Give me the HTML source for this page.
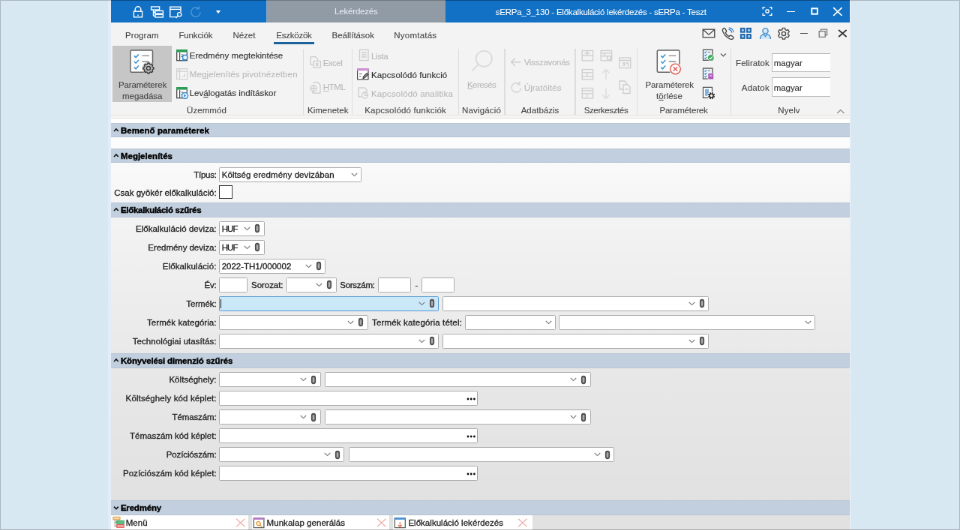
<!DOCTYPE html><html><head><meta charset="utf-8"><title>sERPa</title><style>
html,body{margin:0;padding:0;}
body{width:960px;height:530px;overflow:hidden;background:#d8e8f3;font-family:"Liberation Sans",sans-serif;}
#s{position:absolute;left:0;top:0;width:1280px;height:707px;transform:scale(0.75);transform-origin:0 0;will-change:transform;font-size:11.5px;color:#222;}
#s div,#s span,#s svg{position:absolute;}
.t{white-space:nowrap;line-height:14px;height:14px;-webkit-text-stroke:0.3px currentColor;}
.b{font-weight:bold;color:#000;-webkit-text-stroke-width:0.4px;}
.d{color:#b8b8b8;-webkit-text-stroke-width:0.1px;}
.g{color:#484848;-webkit-text-stroke-width:0.12px;}
.r{color:#333;-webkit-text-stroke-width:0.15px;}
.bx{background:#fff;border:1px solid #adadad;border-radius:1.5px;box-sizing:border-box;}
.hd{background:#c1cfde;box-shadow:inset 0 1px 0 #b8c6d5,inset 0 -1px 0 #b8c6d5;left:147.67px;width:985.66px;height:20px;}
.sep{width:1.500px;background:#dddddd;top:64.5px;height:88px;}
u{text-decoration:underline;}
</style></head><body><div id="s">
<div style="left:144.47px;top:0.00px;width:990.16px;height:707.00px;background:#e2edf7;"></div>
<div style="left:147.67px;top:0.00px;width:985.66px;height:707.00px;background:#f3f3f3;"></div>
<div style="left:147.67px;top:0.00px;width:985.66px;height:30.20px;background:#1271c4;"></div>
<div style="left:147.67px;top:0.00px;width:985.66px;height:1.00px;background:#0f62ab;"></div>
<div style="left:355.00px;top:0.00px;width:239.40px;height:30.40px;background:#919ba6;"></div>
<div style="left:355.00px;top:0.00px;width:1.40px;height:30.20px;background:#86a8cb;"></div>
<div class="t " style="top:8.45px;left:274.85px;width:400px;text-align:center;letter-spacing:-0.197px;color:#e9eef4;-webkit-text-stroke-width:0;"><span id="t1" style="position:static">Lekérdezés</span></div>
<span id="t2" class="t " style="top:8.75px;left:660.70px;letter-spacing:-0.226px;color:#fff;-webkit-text-stroke-width:0.05px;">sERPa_3_130 - Előkalkuláció lekérdezés - sERPa - Teszt</span>
<svg style="left:176.00px;top:7.00px;" width="16.00" height="18.00" viewBox="0 0 16 18"><path d="M4.2 8.2V5.6a3.8 3.8 0 0 1 7.6 0V8.2" stroke="#fff" fill="none" stroke-width="1.4"/><rect x="2.4" y="8.2" width="11.2" height="7.6" stroke="#fff" fill="none" stroke-width="1.4"/><rect x="7.3" y="12.5" width="1.4" height="1.6" fill="#fff"/></svg>
<svg style="left:200.00px;top:7.00px;" width="20.00" height="18.00" viewBox="0 0 20 18"><rect x="1.6" y="2" width="11" height="4" stroke="#fff" fill="none" stroke-width="1.4"/><path d="M4.5 6v8.6M4.5 9.3h2.5M4.5 14.4h2.5" stroke="#fff" fill="none" stroke-width="1.4"/><rect x="7" y="7.4" width="10.4" height="3.6" stroke="#fff" fill="none" stroke-width="1.4"/><rect x="7" y="12.4" width="10.4" height="3.6" stroke="#fff" fill="none" stroke-width="1.4"/></svg>
<svg style="left:225.00px;top:7.00px;" width="20.00" height="18.00" viewBox="0 0 20 18"><path d="M10.5 15.6H1.8V2.2H16V9" stroke="#fff" fill="none" stroke-width="1.4"/><path d="M1.8 5.4H16" stroke="#fff" fill="none" stroke-width="1.4"/><circle cx="14.2" cy="12.2" r="2.6" stroke="#fff" fill="none" stroke-width="1.4"/><path d="M12.2 14.2L9.6 17" stroke="#fff" fill="none" stroke-width="1.4"/></svg>
<svg style="left:252.00px;top:7.00px;" width="19.00" height="18.00" viewBox="0 0 19 18"><path d="M15.2 9.4a6.2 6.2 0 1 1-2.2-5" stroke="#4b96da" fill="none" stroke-width="1.5"/><path d="M13.4 1.2v3.6h-3.6" stroke="#4b96da" fill="none" stroke-width="1.5"/></svg>
<svg style="left:286.70px;top:12.70px;" width="8.00" height="6.00" viewBox="0 0 8 6"><path d="M0.8 1h6.4L4 5z" fill="#fff"/></svg>
<svg style="left:1016.00px;top:7.50px;" width="14.00" height="14.00" viewBox="0 0 14 14"><path d="M1.2 4.4V1.6H4.2M9.8 1.6h3v2.8M12.8 9.6v2.8h-3M4.2 12.4H1.2V9.6" stroke="#fff" fill="none" stroke-width="1.4"/><rect x="5" y="5" width="4" height="4" rx="1" stroke="#fff" fill="none" stroke-width="1.4"/></svg>
<div style="left:1048.70px;top:14.50px;width:11.00px;height:1.70px;background:#fff;"></div>
<svg style="left:1079.50px;top:8.50px;" width="12.00" height="12.00" viewBox="0 0 12 12"><rect x="2.3" y="2.3" width="7.6" height="7.4" stroke="#fff" fill="none" stroke-width="2"/></svg>
<svg style="left:1110.00px;top:8.90px;" width="14.00" height="13.00" viewBox="0 0 14 13"><path d="M1.2 1.2L12.6 11.8M12.6 1.2L1.2 11.8" stroke="#fff" fill="none" stroke-width="1.7"/></svg>
<svg style="left:936.00px;top:38.00px;" width="18.00" height="13.00" viewBox="0 0 18 13"><rect x="1.2" y="1.2" width="15.6" height="10.6" stroke="#444" fill="none" stroke-width="1.3"/><path d="M1.4 1.6L9 8.2L16.6 1.6" stroke="#444" fill="none" stroke-width="1.3"/></svg>
<svg style="left:961.00px;top:35.50px;" width="18.00" height="18.00" viewBox="0 0 18 18"><path d="M3.2 2.2c1-1 2-1 2.6 0l1.6 2.6c.4.8.2 1.4-.4 2l-.8.8c.8 2 2.6 4 4.8 5l.9-.9c.6-.6 1.300-.7 2-.3l2.500 1.600c.9.600.9 1.600 0 2.500-1.400 1.400-3.200 1.200-5.600-.2-3.400-2-6.200-5.200-7.800-8.800-.8-1.800-.8-3.200.2-4.300z" stroke="#444" fill="none" stroke-width="1.3"/><path d="M10.4 3.200a5 5 0 0 1 4.400 4.400M10.800 0.800a7.600 7.600 0 0 1 6.400 6.400" stroke="#2a7fc9" fill="none" stroke-width="1.2"/></svg>
<svg style="left:986.30px;top:36.30px;" width="17.00" height="17.00" viewBox="0 0 17 17"><rect x="1.9" y="1.9" width="4.800" height="4.800" stroke="#1d68ab" fill="#b5d3ec" stroke-width="2"/><rect x="10.100" y="1.9" width="4.800" height="4.800" stroke="#1d68ab" fill="#b5d3ec" stroke-width="2"/><rect x="1.9" y="10.100" width="4.800" height="4.800" stroke="#1d68ab" fill="#b5d3ec" stroke-width="2"/><rect x="10.100" y="10.100" width="4.800" height="4.800" stroke="#1d68ab" fill="#b5d3ec" stroke-width="2"/></svg>
<svg style="left:1012.30px;top:36.30px;" width="17.00" height="17.00" viewBox="0 0 17 17"><circle cx="8.5" cy="5.2" r="3.6" stroke="#3a8ed0" fill="#d5e8f7" stroke-width="1.4"/><path d="M1.6 16c0-3.600 2.400-5.800 4.600-6.400l2.300 3 2.300-3c2.200.6 4.600 2.800 4.600 6.400" stroke="#3a8ed0" fill="#d5e8f7" stroke-width="1.4"/></svg>
<svg style="left:1036.30px;top:35.50px;" width="18.00" height="18.00" viewBox="0 0 18 18"><path d="M7.4 1.400h3.200l.5 2.200 1.500.800 2.100-.800 1.600 2.800-1.600 1.500v1.800l1.600 1.500-1.600 2.800-2.100-.8-1.500.8-.5 2.200H7.400l-.5-2.200-1.500-.8-2.100.8-1.600-2.800 1.600-1.500V8l-1.600-1.600 1.600-2.800 2.100.8 1.500-.8z" stroke="#444" fill="none" stroke-width="1.3" stroke-linejoin="round"/><circle cx="9" cy="9" r="2.600" stroke="#444" fill="none" stroke-width="1.3"/></svg>
<div style="left:1066.70px;top:43.70px;width:10.50px;height:1.40px;background:#555;"></div>
<svg style="left:1091.00px;top:38.00px;" width="13.00" height="13.00" viewBox="0 0 13 13"><path d="M3.600 3.400V1.200H11.600V8.800H9.400" stroke="#7c7c7c" fill="none" stroke-width="1.3"/><rect x="1.200" y="3.600" width="8" height="7.800" stroke="#7c7c7c" fill="none" stroke-width="1.300"/></svg>
<svg style="left:1117.00px;top:39.00px;" width="13.00" height="11.00" viewBox="0 0 13 11"><path d="M1.2 1L11.600 10M11.600 1L1.200 10" stroke="#333" fill="none" stroke-width="1.700"/></svg>
<span id="t3" class="t g" style="top:39.85px;left:167.00px;letter-spacing:0.072px;">Program</span>
<span id="t4" class="t g" style="top:39.85px;left:238.40px;letter-spacing:-0.141px;">Funkciók</span>
<span id="t5" class="t g" style="top:39.85px;left:310.40px;letter-spacing:-0.009px;">Nézet</span>
<span id="t6" class="t g" style="top:39.85px;left:368.30px;letter-spacing:-0.240px;">Eszközök</span>
<div style="left:365.20px;top:56.20px;width:53.50px;height:2.60px;background:#1c639d;"></div>
<span id="t7" class="t g" style="top:39.85px;left:442.50px;letter-spacing:0.022px;">Beállítások</span>
<span id="t8" class="t g" style="top:39.85px;left:525.30px;letter-spacing:0.226px;">Nyomtatás</span>
<div style="left:147.67px;top:152.60px;width:985.66px;height:0.90px;background:#e4e3e2;"></div>
<div style="left:147.67px;top:153.50px;width:985.66px;height:3.10px;background:#f6f5f4;"></div>
<div style="left:147.67px;top:156.60px;width:985.66px;height:0.90px;background:#e0e0e0;"></div>
<div style="left:147.67px;top:157.50px;width:985.66px;height:7.00px;background:#ffffff;"></div>
<div style="left:149.70px;top:61.30px;width:79.50px;height:74.40px;background:#c6c6c6;"></div>
<svg style="left:170.00px;top:63.00px;" width="44.00" height="40.00" viewBox="0 0 44 40"><rect x="3.9" y="4" width="29.6" height="29.2" rx="1.5" stroke="#666" fill="#fdfdfd" stroke-width="1.5"/><path d="M8.9 11.4l2.2 2.200 3.800-4.200M8.9 19l2.200 2.200 3.800-4.200M8.9 26.6l2.200 2.200 3.800-4.200" stroke="#3f93d2" fill="none" stroke-width="1.5"/><path d="M19.4 11.4h9.500M19.4 19h9.500" stroke="#8c8c8c" fill="none" stroke-width="1.4"/><circle cx="28" cy="28" r="8.6" fill="#c6c6c6"/><path d="M34.94 27.09 L34.94 28.91 L33.41 29.45 L32.85 30.80 L33.55 32.27 L32.27 33.55 L30.80 32.85 L29.45 33.41 L28.91 34.94 L27.09 34.94 L26.55 33.41 L25.20 32.85 L23.73 33.55 L22.45 32.27 L23.15 30.80 L22.59 29.45 L21.06 28.91 L21.06 27.09 L22.59 26.55 L23.15 25.20 L22.45 23.73 L23.73 22.45 L25.20 23.15 L26.55 22.59 L27.09 21.06 L28.91 21.06 L29.45 22.59 L30.80 23.15 L32.27 22.45 L33.55 23.73 L32.85 25.20 L33.41 26.55Z" stroke="#3c3c3c" fill="#c6c6c6" stroke-width="1.500" stroke-linejoin="round"/><circle cx="28" cy="28" r="2.52" stroke="#3c3c3c" fill="none" stroke-width="1.500"/></svg>
<div class="t g" style="top:106.15px;left:-9.95px;width:400px;text-align:center;letter-spacing:-0.159px;"><span id="t9" style="position:static">Paraméterek</span></div>
<div class="t g" style="top:121.15px;left:-10.30px;width:400px;text-align:center;letter-spacing:-0.040px;"><span id="t10" style="position:static">megadása</span></div>
<svg style="left:233.70px;top:64.90px;" width="18.00" height="18.00" viewBox="0 0 18 18"><rect x="1.7" y="1.7" width="13.600" height="14" stroke="#4a4a4a" fill="#fff" stroke-width="1.300"/><rect x="1" y="1" width="15" height="3.600" fill="#2e9b57"/><path d="M5.6 5v10.500M7.5 8h3M7.5 10.5h3" stroke="#4a4a4a" fill="none" stroke-width="1.200"/><circle cx="12.8" cy="11.5" r="3.300" stroke="#3a8ed0" fill="#e8f3fc" stroke-width="1.500"/><path d="M10.5 14l-2.200 2.400" stroke="#3a8ed0" stroke-width="1.500"/></svg>
<svg style="left:233.70px;top:90.00px;" width="18.00" height="18.00" viewBox="0 0 18 18"><rect x="1.7" y="1.7" width="14" height="14" stroke="#cfcfcf" fill="#f6f6f6" stroke-width="1.200"/><path d="M1.7 5.2h14M5.5 1.7v14M8 12h4.500v-4" stroke="#cfcfcf" fill="none" stroke-width="1.200"/></svg>
<svg style="left:233.70px;top:115.00px;" width="18.00" height="18.00" viewBox="0 0 18 18"><rect x="1.7" y="1.7" width="13.600" height="14" stroke="#4a4a4a" fill="#fff" stroke-width="1.300"/><rect x="1" y="1" width="15" height="3.600" fill="#2e9b57"/><path d="M5.6 5v10.500M7.5 8h3M7.5 10.5h3" stroke="#4a4a4a" fill="none" stroke-width="1.200"/><circle cx="12.5" cy="12.5" r="4" stroke="#3a8ed0" fill="#e8f3fc" stroke-width="1.400"/><path d="M11.3 10.5l2.800 2-2.800 2z" fill="#2a7fc9"/></svg>
<span id="t11" class="t r" style="top:67.45px;left:252.70px;letter-spacing:0.028px;">Eredmény megtekintése</span>
<span id="t12" class="t d" style="top:92.45px;left:252.70px;letter-spacing:0.153px;">Megjelenítés pivotnézetben</span>
<span id="t13" class="t r" style="top:117.45px;left:252.70px;letter-spacing:0.023px;">Lev<u>á</u>logatás indításkor</span>
<div class="t g" style="top:139.55px;left:75.50px;width:400px;text-align:center;letter-spacing:0.085px;"><span id="t14" style="position:static">Üzemmód</span></div>
<div class="sep" style="left:403.75px"></div>
<div class="sep" style="left:468.55px"></div>
<div class="sep" style="left:610.95px"></div>
<div class="sep" style="left:672.25px"></div>
<div class="sep" style="left:766.25px"></div>
<div class="sep" style="left:848.55px"></div>
<div class="sep" style="left:973.75px"></div>
<svg style="left:411.50px;top:74.30px;" width="18.00" height="18.00" viewBox="0 0 18 18"><path d="M2 1.700h6.500l3 3v3" stroke="#cdcdcd" fill="none" stroke-width="1.300"/><path d="M2 1.700v10.500h3.500" stroke="#cdcdcd" fill="none" stroke-width="1.300"/><rect x="6" y="7.500" width="9.500" height="8.500" stroke="#cdcdcd" fill="none" stroke-width="1.300"/><path d="M9 10l3.500 4M12.500 10l-3.500 4" stroke="#cdcdcd" fill="none" stroke-width="1.300"/></svg>
<span id="t15" class="t d" style="top:77.05px;left:430.70px;letter-spacing:-0.506px;">Excel</span>
<svg style="left:411.50px;top:107.80px;" width="18.00" height="18.00" viewBox="0 0 18 18"><path d="M5 1.700h6.500l3.500 3.500v11h-10v-4" stroke="#cdcdcd" fill="none" stroke-width="1.300"/><circle cx="6" cy="10" r="4" stroke="#cdcdcd" fill="none" stroke-width="1.300"/><path d="M2 10h8M6 6v8" stroke="#cdcdcd" fill="none" stroke-width="1.300"/></svg>
<span id="t16" class="t d" style="top:109.45px;left:430.70px;letter-spacing:-0.380px;"><u>H</u>TML</span>
<div class="t g" style="top:139.55px;left:237.25px;width:400px;text-align:center;letter-spacing:0.017px;"><span id="t17" style="position:static">Kimenetek</span></div>
<svg style="left:477.70px;top:64.90px;" width="15.00" height="17.00" viewBox="0 0 15 17"><rect x="1.500" y="1.300" width="11.500" height="14.200" stroke="#cdcdcd" fill="none" stroke-width="1.300"/><path d="M4 5h6.500M4 8h6.500M4 11h6.500" stroke="#cdcdcd" fill="none" stroke-width="1.300"/></svg>
<span id="t18" class="t d" style="top:67.85px;left:495.00px;letter-spacing:-0.401px;">Lista</span>
<svg style="left:475.30px;top:89.70px;" width="18.00" height="18.00" viewBox="0 0 18 18"><rect x="1.600" y="2.200" width="14.400" height="13.600" stroke="#4a4a4a" fill="#fff" stroke-width="1.200"/><rect x="1" y="1" width="15.600" height="3.200" fill="#d08fd2"/><path d="M4 8.500h3.500M4 11.500h2.500" stroke="#666" stroke-width="1.100"/><path d="M8.800 14.600l.8-2.800 4.600-4.600 2 2-4.600 4.600z" fill="#777" stroke="#333" stroke-width="1"/></svg>
<span id="t19" class="t r" style="top:92.75px;left:495.00px;letter-spacing:0.087px;">Kapcsolódó funkció</span>
<svg style="left:475.30px;top:114.50px;" width="18.00" height="18.00" viewBox="0 0 18 18"><path d="M3 2h8l3 3v4" stroke="#cdcdcd" fill="none" stroke-width="1.300"/><path d="M3 2v12h4" stroke="#cdcdcd" fill="none" stroke-width="1.300"/><circle cx="11.500" cy="12" r="4" stroke="#cdcdcd" fill="none" stroke-width="1.300"/><path d="M11.500 8v4h4" stroke="#cdcdcd" fill="none" stroke-width="1.300"/></svg>
<span id="t20" class="t d" style="top:117.65px;left:495.00px;letter-spacing:0.175px;">Kapcsolódó analitika</span>
<div class="t g" style="top:139.55px;left:340.65px;width:400px;text-align:center;letter-spacing:0.169px;"><span id="t21" style="position:static">Kapcsolódó funkciók</span></div>
<svg style="left:625.00px;top:62.00px;" width="36.00" height="38.00" viewBox="0 0 36 38"><circle cx="20.300" cy="16.300" r="10.600" stroke="#d8d8d8" fill="none" stroke-width="1.600"/><path d="M12.800 23.800L4.200 32.700" stroke="#d8d8d8" stroke-width="1.600"/></svg>
<div class="t d" style="top:105.95px;left:442.10px;width:400px;text-align:center;letter-spacing:-0.572px;"><span id="t22" style="position:static"><u>K</u>eresés</span></div>
<div class="t g" style="top:139.55px;left:442.00px;width:400px;text-align:center;letter-spacing:0.167px;"><span id="t23" style="position:static">Navigáció</span></div>
<svg style="left:680.00px;top:76.00px;" width="16.00" height="13.00" viewBox="0 0 16 13"><path d="M14.200 6.700H1.800M6.800 1.500L1.600 6.700l5.200 5.200" stroke="#cdcdcd" fill="none" stroke-width="1.400"/></svg>
<span id="t24" class="t d" style="top:76.05px;left:698.70px;letter-spacing:-0.305px;">Visszavonás</span>
<svg style="left:680.00px;top:108.00px;" width="18.00" height="17.00" viewBox="0 0 18 17"><path d="M14.600 9.200a6.300 6.300 0 1 1-2.400-5.400" stroke="#d4d4d4" fill="none" stroke-width="1.500"/><path d="M12.800 0.800v3.600h-3.600" stroke="#d4d4d4" fill="none" stroke-width="1.500"/></svg>
<span id="t25" class="t d" style="top:109.65px;left:698.70px;letter-spacing:0.142px;">Újratöltés</span>
<div class="t g" style="top:139.55px;left:520.00px;width:400px;text-align:center;letter-spacing:0.011px;"><span id="t26" style="position:static">Adatbázis</span></div>
<svg style="left:775.00px;top:65.50px;" width="70.00" height="68.00" viewBox="0 0 70 68"><rect x="1.2" y="1.5" width="14.400" height="13.400" stroke="#cdcdcd" fill="none" stroke-width="1.300"/><path d="M1.2 8.200000000000001h14.400M4.5 4.8h7M8.0 1.8v6" stroke="#cdcdcd" fill="none" stroke-width="1.300"/><rect x="1.2" y="26.5" width="14.400" height="13.400" stroke="#cdcdcd" fill="none" stroke-width="1.300"/><path d="M1.2 30.8h14.400M1.2 35.8h14.400M8.0 31.8v3" stroke="#cdcdcd" fill="none" stroke-width="1.300"/><rect x="1.2" y="51.5" width="14.400" height="13.400" stroke="#cdcdcd" fill="none" stroke-width="1.300"/><path d="M1.2 54.8h14.400M1.2 58.8h14.400M8.0 60.3v3" stroke="#cdcdcd" fill="none" stroke-width="1.300"/><rect x="26.2" y="1.5" width="14.400" height="13.400" stroke="#cdcdcd" fill="none" stroke-width="1.300"/><path d="M26.2 4.8h14.400M26.2 8.8h9M31.0 4.8v4"  stroke="#cdcdcd" fill="none" stroke-width="1.300"/><circle cx="37.0" cy="11.3" r="2.600" stroke="#cdcdcd" fill="none" stroke-width="1.300"/><path d="M33 40V27M28.500 31.500l4.500-4.700 4.500 4.700" stroke="#dadada" fill="none" stroke-width="1.300"/><path d="M33 52v13M28.500 60.500l4.500 4.700 4.500-4.700" stroke="#dadada" fill="none" stroke-width="1.300"/><rect x="50.800" y="11" width="15" height="13.600" stroke="#cdcdcd" fill="none" stroke-width="1.300"/><path d="M50.800 14.500h15M55 18h3v3h-3M60 18h2.500v4.500" stroke="#cdcdcd" fill="none" stroke-width="1.300"/><path d="M51 42h6.500l3 3v8h-9.500z" stroke="#cdcdcd" fill="none" stroke-width="1.300"/><path d="M56 47h6l3 3v8.500h-9z" stroke="#cdcdcd" fill="#f3f3f3" stroke-width="1.300"/><path d="M58 53h5" stroke="#cdcdcd" fill="none" stroke-width="1.300"/></svg>
<div class="t g" style="top:139.55px;left:608.00px;width:400px;text-align:center;letter-spacing:-0.367px;"><span id="t27" style="position:static">Szerkesztés</span></div>
<svg style="left:872.00px;top:63.00px;" width="44.00" height="40.00" viewBox="0 0 44 40"><rect x="4.3" y="4" width="29.6" height="29.2" rx="1.5" stroke="#666" fill="#fdfdfd" stroke-width="1.5"/><path d="M9.3 11.4l2.2 2.200 3.800-4.200M9.3 19l2.200 2.200 3.800-4.200M9.3 26.6l2.200 2.200 3.800-4.200" stroke="#3f93d2" fill="none" stroke-width="1.5"/><path d="M19.8 11.4h9.500M19.8 19h9.500" stroke="#8c8c8c" fill="none" stroke-width="1.4"/><circle cx="28.500" cy="29" r="8.600" fill="#f3f3f3"/><circle cx="28.500" cy="29" r="6.800" stroke="#e4524c" fill="#fff" stroke-width="1.300"/><path d="M25.700 26.200l5.600 5.600M31.300 26.200l-5.600 5.600" stroke="#e4524c" stroke-width="1.300"/></svg>
<div class="t g" style="top:106.45px;left:692.75px;width:400px;text-align:center;letter-spacing:-0.122px;"><span id="t28" style="position:static">Paraméterek</span></div>
<div class="t g" style="top:121.45px;left:692.50px;width:400px;text-align:center;letter-spacing:0.065px;"><span id="t29" style="position:static">t<u>ö</u>rlése</span></div>
<div class="t g" style="top:139.55px;left:711.60px;width:400px;text-align:center;letter-spacing:-0.149px;"><span id="t30" style="position:static">Paraméterek</span></div>
<svg style="left:935.50px;top:64.90px;" width="20.00" height="70.00" viewBox="0 0 20 70"><rect x="1.5" y="1.3" width="12.500" height="14" stroke="#555" fill="#eef3f8" stroke-width="1.300"/><path d="M3.5 4.5l1 1 1.800-2M3.5 8.3l1 1 1.800-2M3.5 12.1l1 1 1.800-2" stroke="#2a86c8" fill="none" stroke-width="1.100"/><path d="M8 4.5h3" stroke="#777" stroke-width="1.100"/><circle cx="11.8" cy="12.0" r="4.300" fill="#35a853" stroke="#f3f3f3" stroke-width="0.800"/><path d="M9.8 12.0l1.500 1.500 2.600-3" stroke="#fff" fill="none" stroke-width="1.200"/><rect x="1.5" y="26.1" width="12.500" height="14" stroke="#555" fill="#eef3f8" stroke-width="1.300"/><path d="M3.5 29.3l1 1 1.800-2M3.5 33.1l1 1 1.800-2M3.5 36.9l1 1 1.800-2" stroke="#2a86c8" fill="none" stroke-width="1.100"/><path d="M8 29.3h3" stroke="#777" stroke-width="1.100"/><rect x="8" y="32.8" width="7.600" height="8" fill="#a755b5" stroke="#f3f3f3" stroke-width="0.600"/><path d="M10 34.8h3.600v2.500h-3.600z" fill="#d9a8e2"/><rect x="1.5" y="51.4" width="12" height="14" stroke="#555" fill="#fff" stroke-width="1.300"/><rect x="4" y="53.800000000000004" width="5" height="9" fill="#7fb2df"/><circle cx="12.6" cy="62.6" r="5.400" fill="#f3f3f3"/><circle cx="12.6" cy="62.6" r="2.500" stroke="#1c1c1c" fill="#f8f8f8" stroke-width="1.400"/><path d="M15.28 63.70L16.95 64.39M13.72 65.28L14.41 66.94M11.50 65.28L10.81 66.95M9.92 63.72L8.26 64.41M9.92 61.50L8.25 60.81M11.48 59.92L10.79 58.26M13.70 59.92L14.39 58.25M15.28 61.48L16.94 60.79" stroke="#1c1c1c" stroke-width="1.500"/></svg>
<svg style="left:960.00px;top:69.50px;" width="9.00" height="7.00" viewBox="0 0 9 7"><path d="M1 1.500l3.400 3.400 3.400-3.400" stroke="#555" fill="none" stroke-width="1.200"/></svg>
<span id="t31" class="t g" style="top:77.45px;right:254.10px;letter-spacing:0.088px;">Feliratok</span>
<span id="t32" class="t g" style="top:109.95px;right:254.10px;letter-spacing:0.214px;">Adatok</span>
<div class="bx" style="left:1029.30px;top:70.50px;width:77.70px;height:25.20px;border-color:#b4b4b4 #c4c4c4 #bcbcbc #bcbcbc;border-right:none;border-radius:0;"></div>
<div class="bx" style="left:1029.30px;top:103.20px;width:77.70px;height:25.50px;border-color:#b4b4b4 #c4c4c4 #bcbcbc #bcbcbc;border-right:none;border-radius:0;"></div>
<span id="t33" class="t r" style="top:76.95px;left:1031.80px;letter-spacing:-0.076px;">magyar</span>
<span id="t34" class="t r" style="top:109.95px;left:1031.80px;letter-spacing:-0.076px;">magyar</span>
<div class="t g" style="top:139.55px;left:852.00px;width:400px;text-align:center;letter-spacing:0.128px;"><span id="t35" style="position:static">Nyelv</span></div>
<svg style="left:1115.00px;top:144.50px;" width="12.00" height="8.00" viewBox="0 0 12 8"><path d="M1.200 6l4.600-4.400 4.600 4.400" stroke="#8a8a8a" fill="none" stroke-width="1.200"/></svg>
<div style="left:147.67px;top:164.5px;width:985.66px;height:545px;background:linear-gradient(#ffffff 0px,#fbfbfb 40px,#f2f2f2 150px,#e8e8e8 330px,#e1e1e1 520px);"></div>
<div class="hd" style="top:164.40px;height:19.10px"></div>
<svg style="left:151.20px;top:169.95px;" width="8.00" height="7.00" viewBox="0 0 8 7"><path d="M1 5l2.900-3 2.900 3" stroke="#111" fill="none" stroke-width="1.600"/></svg>
<span id="t36" class="t b" style="top:167.40px;left:160.90px;letter-spacing:0.063px;">Bemenő paraméterek</span>
<div class="hd" style="top:197.70px;height:19.70px"></div>
<svg style="left:151.20px;top:203.55px;" width="8.00" height="7.00" viewBox="0 0 8 7"><path d="M1 5l2.900-3 2.900 3" stroke="#111" fill="none" stroke-width="1.600"/></svg>
<span id="t37" class="t b" style="top:201.00px;left:160.90px;letter-spacing:0.006px;">Megjelenítés</span>
<span id="t38" class="t " style="top:226.45px;right:991.40px;letter-spacing:-0.278px;">Típus:</span>
<div class="bx" style="left:292.30px;top:222.70px;width:189.70px;height:20.60px;"></div>
<svg style="left:468.00px;top:230.30px;" width="9.00" height="6.00" viewBox="0 0 9 6"><path d="M0.800 1l3.700 3.600 3.700-3.600" stroke="#7a7a7a" fill="none" stroke-width="1.100"/></svg>
<span id="t39" class="t " style="top:226.35px;left:295.70px;letter-spacing:0.064px;">Költség eredmény devizában</span>
<span id="t40" class="t " style="top:249.85px;right:991.40px;letter-spacing:0.006px;">Csak gyökér előkalkuláció:</span>
<div class="bx" style="left:292.30px;top:247.00px;width:17.30px;height:18.40px;border-color:#333;border-radius:0;"></div>
<div class="hd" style="top:270.00px;height:20.00px"></div>
<svg style="left:151.20px;top:276.00px;" width="8.00" height="7.00" viewBox="0 0 8 7"><path d="M1 5l2.900-3 2.900 3" stroke="#111" fill="none" stroke-width="1.600"/></svg>
<span id="t41" class="t b" style="top:273.45px;left:160.90px;letter-spacing:-0.287px;">Előkalkuláció szűrés</span>
<span id="t42" class="t " style="top:297.90px;right:991.40px;letter-spacing:0.040px;">Előkalkuláció deviza:</span>
<div class="bx" style="left:292.30px;top:295.00px;width:60.40px;height:19.50px;"></div>
<svg style="left:339.40px;top:298.45px;" width="8.00" height="13.00" viewBox="0 0 8 13"><rect x="1.700" y="1.600" width="4.600" height="9.800" rx="2.300" stroke="#4a4a4a" fill="#999" stroke-width="1.600"/><path d="M4 4.200v4.600" stroke="#d0d0d0" stroke-width="0.700"/></svg>
<svg style="left:325.40px;top:302.05px;" width="9.00" height="6.00" viewBox="0 0 9 6"><path d="M0.800 1l3.700 3.600 3.700-3.600" stroke="#7a7a7a" fill="none" stroke-width="1.100"/></svg>
<span id="t43" class="t " style="top:297.90px;left:295.70px;letter-spacing:-0.945px;">HUF</span>
<span id="t44" class="t " style="top:322.90px;right:991.40px;letter-spacing:-0.047px;">Eredmény deviza:</span>
<div class="bx" style="left:292.30px;top:320.00px;width:60.40px;height:19.50px;"></div>
<svg style="left:339.40px;top:323.45px;" width="8.00" height="13.00" viewBox="0 0 8 13"><rect x="1.700" y="1.600" width="4.600" height="9.800" rx="2.300" stroke="#4a4a4a" fill="#999" stroke-width="1.600"/><path d="M4 4.200v4.600" stroke="#d0d0d0" stroke-width="0.700"/></svg>
<svg style="left:325.40px;top:327.05px;" width="9.00" height="6.00" viewBox="0 0 9 6"><path d="M0.800 1l3.700 3.600 3.700-3.600" stroke="#7a7a7a" fill="none" stroke-width="1.100"/></svg>
<span id="t45" class="t " style="top:322.90px;left:295.70px;letter-spacing:-0.945px;">HUF</span>
<span id="t46" class="t " style="top:347.90px;right:991.40px;letter-spacing:0.113px;">Előkalkuláció:</span>
<div class="bx" style="left:292.30px;top:345.00px;width:141.70px;height:19.50px;"></div>
<svg style="left:420.70px;top:348.45px;" width="8.00" height="13.00" viewBox="0 0 8 13"><rect x="1.700" y="1.600" width="4.600" height="9.800" rx="2.300" stroke="#4a4a4a" fill="#999" stroke-width="1.600"/><path d="M4 4.200v4.600" stroke="#d0d0d0" stroke-width="0.700"/></svg>
<svg style="left:406.70px;top:352.05px;" width="9.00" height="6.00" viewBox="0 0 9 6"><path d="M0.800 1l3.700 3.600 3.700-3.600" stroke="#7a7a7a" fill="none" stroke-width="1.100"/></svg>
<span id="t47" class="t " style="top:347.90px;left:295.70px;letter-spacing:-0.008px;">2022-TH1/000002</span>
<span id="t48" class="t " style="top:372.90px;right:991.40px;letter-spacing:-0.174px;">Év:</span>
<div class="bx" style="left:292.30px;top:370.00px;width:37.70px;height:19.50px;"></div>
<span id="t49" class="t " style="top:372.90px;left:335.00px;letter-spacing:-0.041px;">Sorozat:</span>
<div class="bx" style="left:382.00px;top:370.00px;width:66.70px;height:19.50px;"></div>
<svg style="left:435.40px;top:373.45px;" width="8.00" height="13.00" viewBox="0 0 8 13"><rect x="1.700" y="1.600" width="4.600" height="9.800" rx="2.300" stroke="#4a4a4a" fill="#999" stroke-width="1.600"/><path d="M4 4.200v4.600" stroke="#d0d0d0" stroke-width="0.700"/></svg>
<svg style="left:421.40px;top:377.05px;" width="9.00" height="6.00" viewBox="0 0 9 6"><path d="M0.800 1l3.700 3.600 3.700-3.600" stroke="#7a7a7a" fill="none" stroke-width="1.100"/></svg>
<span id="t50" class="t " style="top:372.90px;left:453.30px;letter-spacing:-0.285px;">Sorszám:</span>
<div class="bx" style="left:504.00px;top:370.00px;width:44.00px;height:19.50px;"></div>
<span id="t51" class="t " style="top:372.90px;left:553.50px;letter-spacing:0.156px;">-</span>
<div class="bx" style="left:562.40px;top:370.00px;width:43.60px;height:19.50px;"></div>
<span id="t52" class="t " style="top:397.90px;right:991.40px;letter-spacing:-0.087px;">Termék:</span>
<div class="bx" style="left:292.30px;top:395.00px;width:292.90px;height:19.50px;background:#cbe8f9;border-color:#5b9bd3;"></div>
<svg style="left:571.90px;top:398.45px;" width="8.00" height="13.00" viewBox="0 0 8 13"><rect x="1.700" y="1.600" width="4.600" height="9.800" rx="2.300" stroke="#4a4a4a" fill="#999" stroke-width="1.600"/><path d="M4 4.200v4.600" stroke="#d0d0d0" stroke-width="0.700"/></svg>
<svg style="left:557.90px;top:402.05px;" width="9.00" height="6.00" viewBox="0 0 9 6"><path d="M0.800 1l3.700 3.600 3.700-3.600" stroke="#7a7a7a" fill="none" stroke-width="1.100"/></svg>
<div style="left:294.40px;top:398.50px;width:1.00px;height:12.50px;background:#222;"></div>
<div class="bx" style="left:589.70px;top:395.00px;width:355.30px;height:19.50px;"></div>
<svg style="left:931.70px;top:398.45px;" width="8.00" height="13.00" viewBox="0 0 8 13"><rect x="1.700" y="1.600" width="4.600" height="9.800" rx="2.300" stroke="#4a4a4a" fill="#999" stroke-width="1.600"/><path d="M4 4.200v4.600" stroke="#d0d0d0" stroke-width="0.700"/></svg>
<svg style="left:917.70px;top:402.05px;" width="9.00" height="6.00" viewBox="0 0 9 6"><path d="M0.800 1l3.700 3.600 3.700-3.600" stroke="#7a7a7a" fill="none" stroke-width="1.100"/></svg>
<span id="t53" class="t " style="top:422.90px;right:991.40px;letter-spacing:0.070px;">Termék kategória:</span>
<div class="bx" style="left:292.30px;top:420.00px;width:198.40px;height:19.50px;"></div>
<svg style="left:477.40px;top:423.45px;" width="8.00" height="13.00" viewBox="0 0 8 13"><rect x="1.700" y="1.600" width="4.600" height="9.800" rx="2.300" stroke="#4a4a4a" fill="#999" stroke-width="1.600"/><path d="M4 4.200v4.600" stroke="#d0d0d0" stroke-width="0.700"/></svg>
<svg style="left:463.40px;top:427.05px;" width="9.00" height="6.00" viewBox="0 0 9 6"><path d="M0.800 1l3.700 3.600 3.700-3.600" stroke="#7a7a7a" fill="none" stroke-width="1.100"/></svg>
<span id="t54" class="t " style="top:422.90px;left:496.00px;letter-spacing:0.159px;">Termék kategória tétel:</span>
<div class="bx" style="left:620.00px;top:420.00px;width:121.30px;height:19.50px;"></div>
<svg style="left:727.30px;top:427.05px;" width="9.00" height="6.00" viewBox="0 0 9 6"><path d="M0.800 1l3.700 3.600 3.700-3.600" stroke="#7a7a7a" fill="none" stroke-width="1.100"/></svg>
<div class="bx" style="left:745.30px;top:420.00px;width:341.40px;height:19.50px;"></div>
<svg style="left:1072.70px;top:427.05px;" width="9.00" height="6.00" viewBox="0 0 9 6"><path d="M0.800 1l3.700 3.600 3.700-3.600" stroke="#7a7a7a" fill="none" stroke-width="1.100"/></svg>
<span id="t55" class="t " style="top:447.90px;right:991.40px;letter-spacing:0.059px;">Technológiai utasítás:</span>
<div class="bx" style="left:292.30px;top:445.00px;width:292.90px;height:19.50px;"></div>
<svg style="left:571.90px;top:448.45px;" width="8.00" height="13.00" viewBox="0 0 8 13"><rect x="1.700" y="1.600" width="4.600" height="9.800" rx="2.300" stroke="#4a4a4a" fill="#999" stroke-width="1.600"/><path d="M4 4.200v4.600" stroke="#d0d0d0" stroke-width="0.700"/></svg>
<svg style="left:557.90px;top:452.05px;" width="9.00" height="6.00" viewBox="0 0 9 6"><path d="M0.800 1l3.700 3.600 3.700-3.600" stroke="#7a7a7a" fill="none" stroke-width="1.100"/></svg>
<div class="bx" style="left:589.70px;top:445.00px;width:355.30px;height:19.50px;"></div>
<svg style="left:931.70px;top:448.45px;" width="8.00" height="13.00" viewBox="0 0 8 13"><rect x="1.700" y="1.600" width="4.600" height="9.800" rx="2.300" stroke="#4a4a4a" fill="#999" stroke-width="1.600"/><path d="M4 4.200v4.600" stroke="#d0d0d0" stroke-width="0.700"/></svg>
<svg style="left:917.70px;top:452.05px;" width="9.00" height="6.00" viewBox="0 0 9 6"><path d="M0.800 1l3.700 3.600 3.700-3.600" stroke="#7a7a7a" fill="none" stroke-width="1.100"/></svg>
<div class="hd" style="top:471.00px;height:20.00px"></div>
<svg style="left:151.20px;top:477.00px;" width="8.00" height="7.00" viewBox="0 0 8 7"><path d="M1 5l2.900-3 2.900 3" stroke="#111" fill="none" stroke-width="1.600"/></svg>
<span id="t56" class="t b" style="top:474.45px;left:160.90px;letter-spacing:-0.154px;">Könyvelési dimenzió szűrés</span>
<span id="t57" class="t " style="top:499.20px;right:991.40px;letter-spacing:0.045px;">Költséghely:</span>
<div class="bx" style="left:292.30px;top:496.30px;width:135.40px;height:19.50px;"></div>
<svg style="left:414.40px;top:499.75px;" width="8.00" height="13.00" viewBox="0 0 8 13"><rect x="1.700" y="1.600" width="4.600" height="9.800" rx="2.300" stroke="#4a4a4a" fill="#999" stroke-width="1.600"/><path d="M4 4.200v4.600" stroke="#d0d0d0" stroke-width="0.700"/></svg>
<svg style="left:400.40px;top:503.35px;" width="9.00" height="6.00" viewBox="0 0 9 6"><path d="M0.800 1l3.700 3.600 3.700-3.600" stroke="#7a7a7a" fill="none" stroke-width="1.100"/></svg>
<div class="bx" style="left:433.00px;top:496.30px;width:354.60px;height:19.50px;"></div>
<svg style="left:774.30px;top:499.75px;" width="8.00" height="13.00" viewBox="0 0 8 13"><rect x="1.700" y="1.600" width="4.600" height="9.800" rx="2.300" stroke="#4a4a4a" fill="#999" stroke-width="1.600"/><path d="M4 4.200v4.600" stroke="#d0d0d0" stroke-width="0.700"/></svg>
<svg style="left:760.30px;top:503.35px;" width="9.00" height="6.00" viewBox="0 0 9 6"><path d="M0.800 1l3.700 3.600 3.700-3.600" stroke="#7a7a7a" fill="none" stroke-width="1.100"/></svg>
<span id="t58" class="t " style="top:524.20px;right:991.40px;letter-spacing:0.119px;">Költséghely kód képlet:</span>
<div class="bx" style="left:292.30px;top:521.30px;width:344.70px;height:19.50px;"></div>
<svg style="left:622.00px;top:530.05px;" width="13.00" height="4.00" viewBox="0 0 13 4"><circle cx="2" cy="2" r="1.400" fill="#111"/><circle cx="6.200" cy="2" r="1.400" fill="#111"/><circle cx="10.400" cy="2" r="1.400" fill="#111"/></svg>
<span id="t59" class="t " style="top:549.20px;right:991.40px;letter-spacing:-0.109px;">Témaszám:</span>
<div class="bx" style="left:292.30px;top:546.30px;width:135.40px;height:19.50px;"></div>
<svg style="left:414.40px;top:549.75px;" width="8.00" height="13.00" viewBox="0 0 8 13"><rect x="1.700" y="1.600" width="4.600" height="9.800" rx="2.300" stroke="#4a4a4a" fill="#999" stroke-width="1.600"/><path d="M4 4.200v4.600" stroke="#d0d0d0" stroke-width="0.700"/></svg>
<svg style="left:400.40px;top:553.35px;" width="9.00" height="6.00" viewBox="0 0 9 6"><path d="M0.800 1l3.700 3.600 3.700-3.600" stroke="#7a7a7a" fill="none" stroke-width="1.100"/></svg>
<div class="bx" style="left:433.00px;top:546.30px;width:354.60px;height:19.50px;"></div>
<svg style="left:774.30px;top:549.75px;" width="8.00" height="13.00" viewBox="0 0 8 13"><rect x="1.700" y="1.600" width="4.600" height="9.800" rx="2.300" stroke="#4a4a4a" fill="#999" stroke-width="1.600"/><path d="M4 4.200v4.600" stroke="#d0d0d0" stroke-width="0.700"/></svg>
<svg style="left:760.30px;top:553.35px;" width="9.00" height="6.00" viewBox="0 0 9 6"><path d="M0.800 1l3.700 3.600 3.700-3.600" stroke="#7a7a7a" fill="none" stroke-width="1.100"/></svg>
<span id="t60" class="t " style="top:574.20px;right:991.40px;letter-spacing:-0.005px;">Témaszám kód képlet:</span>
<div class="bx" style="left:292.30px;top:571.30px;width:344.70px;height:19.50px;"></div>
<svg style="left:622.00px;top:580.05px;" width="13.00" height="4.00" viewBox="0 0 13 4"><circle cx="2" cy="2" r="1.400" fill="#111"/><circle cx="6.200" cy="2" r="1.400" fill="#111"/><circle cx="10.400" cy="2" r="1.400" fill="#111"/></svg>
<span id="t61" class="t " style="top:599.20px;right:991.40px;letter-spacing:-0.133px;">Pozíciószám:</span>
<div class="bx" style="left:292.30px;top:596.30px;width:167.20px;height:19.50px;"></div>
<svg style="left:446.20px;top:599.75px;" width="8.00" height="13.00" viewBox="0 0 8 13"><rect x="1.700" y="1.600" width="4.600" height="9.800" rx="2.300" stroke="#4a4a4a" fill="#999" stroke-width="1.600"/><path d="M4 4.200v4.600" stroke="#d0d0d0" stroke-width="0.700"/></svg>
<svg style="left:432.20px;top:603.35px;" width="9.00" height="6.00" viewBox="0 0 9 6"><path d="M0.800 1l3.700 3.600 3.700-3.600" stroke="#7a7a7a" fill="none" stroke-width="1.100"/></svg>
<div class="bx" style="left:464.80px;top:596.30px;width:354.20px;height:19.50px;"></div>
<svg style="left:805.70px;top:599.75px;" width="8.00" height="13.00" viewBox="0 0 8 13"><rect x="1.700" y="1.600" width="4.600" height="9.800" rx="2.300" stroke="#4a4a4a" fill="#999" stroke-width="1.600"/><path d="M4 4.200v4.600" stroke="#d0d0d0" stroke-width="0.700"/></svg>
<svg style="left:791.70px;top:603.35px;" width="9.00" height="6.00" viewBox="0 0 9 6"><path d="M0.800 1l3.700 3.600 3.700-3.600" stroke="#7a7a7a" fill="none" stroke-width="1.100"/></svg>
<span id="t62" class="t " style="top:624.20px;right:991.40px;letter-spacing:0.026px;">Pozíciószám kód képlet:</span>
<div class="bx" style="left:292.30px;top:621.30px;width:344.70px;height:19.50px;"></div>
<svg style="left:622.00px;top:630.05px;" width="13.00" height="4.00" viewBox="0 0 13 4"><circle cx="2" cy="2" r="1.400" fill="#111"/><circle cx="6.200" cy="2" r="1.400" fill="#111"/><circle cx="10.400" cy="2" r="1.400" fill="#111"/></svg>
<div class="hd" style="top:667.00px;height:20.00px"></div>
<svg style="left:151.20px;top:673.80px;" width="8.00" height="7.00" viewBox="0 0 8 7"><path d="M1 1.600l2.900 3 2.900-3" stroke="#111" fill="none" stroke-width="1.600"/></svg>
<span id="t63" class="t b" style="top:670.45px;left:160.90px;letter-spacing:-0.189px;">Eredmény</span>
<div style="left:147.67px;top:687.00px;width:985.66px;height:20.00px;background:#e1e1e1;"></div>
<div style="left:147.67px;top:687.00px;width:183.63px;height:20.00px;background:#ffffff;"></div>
<span id="t64" class="t " style="top:689.55px;left:167.70px;letter-spacing:0.055px;color:#222;">Menü</span>
<svg style="left:314.30px;top:690.50px;" width="14.00" height="12.00" viewBox="0 0 14 12"><path d="M1 0.800l11.500 10.400M12.500 0.800L1 11.200" stroke="#eeb0ab" fill="none" stroke-width="1.200"/></svg>
<svg style="left:149.50px;top:688.20px;" width="17.00" height="17.00" viewBox="0 0 17 17"><rect x="1" y="1.300" width="9" height="3.600" fill="#f6d9a8" stroke="#e59a3a" stroke-width="1"/><path d="M3.200 5v9.300M3.200 8.300h2.500M3.200 13.500h2.500" stroke="#888" fill="none" stroke-width="1"/><rect x="5.700" y="6.300" width="9.600" height="3.800" fill="#5fc08a" stroke="#2e9b57" stroke-width="1"/><rect x="5.700" y="11.500" width="9.600" height="3.800" fill="#f3a4a0" stroke="#d9534f" stroke-width="1"/></svg>
<div style="left:335.60px;top:687.00px;width:183.40px;height:20.00px;background:#ffffff;"></div>
<span id="t65" class="t " style="top:689.55px;left:355.60px;letter-spacing:0.046px;color:#222;">Munkalap generálás</span>
<svg style="left:502.00px;top:690.50px;" width="14.00" height="12.00" viewBox="0 0 14 12"><path d="M1 0.800l11.500 10.400M12.500 0.800L1 11.200" stroke="#eeb0ab" fill="none" stroke-width="1.200"/></svg>
<svg style="left:337.30px;top:688.60px;" width="17.00" height="16.00" viewBox="0 0 17 16"><rect x="1.300" y="1.800" width="13.600" height="12.800" fill="#fff" stroke="#555" stroke-width="1.200"/><rect x="0.800" y="1.200" width="14.600" height="2.600" fill="#b27cc9"/><circle cx="7.600" cy="9" r="2.600" stroke="#e59a3a" fill="#fdf1d8" stroke-width="1.300"/><path d="M9.500 11l2.600 2.600" stroke="#e59a3a" stroke-width="1.400"/></svg>
<div style="left:523.60px;top:687.00px;width:186.70px;height:20.00px;background:#ffffff;"></div>
<span id="t66" class="t " style="top:689.55px;left:544.40px;letter-spacing:0.028px;color:#222;">Előkalkuláció lekérdezés</span>
<svg style="left:690.00px;top:690.50px;" width="14.00" height="12.00" viewBox="0 0 14 12"><path d="M1 0.800l11.500 10.400M12.500 0.800L1 11.200" stroke="#eeb0ab" fill="none" stroke-width="1.200"/></svg>
<svg style="left:525.00px;top:688.60px;" width="17.00" height="16.00" viewBox="0 0 17 16"><rect x="1.300" y="1.800" width="14" height="12.800" fill="#fff" stroke="#555" stroke-width="1.200"/><rect x="0.800" y="1.200" width="15" height="2.600" fill="#4a94d8"/><path d="M8.300 7v6.500M5.800 11l2.500 2.600 2.500-2.600" stroke="#e8734a" fill="none" stroke-width="1.200"/></svg>
</div><div style="position:absolute;left:0;top:0;width:960px;height:530px;box-sizing:border-box;border:1px solid rgba(0,0,0,0.18);"></div></body></html>
